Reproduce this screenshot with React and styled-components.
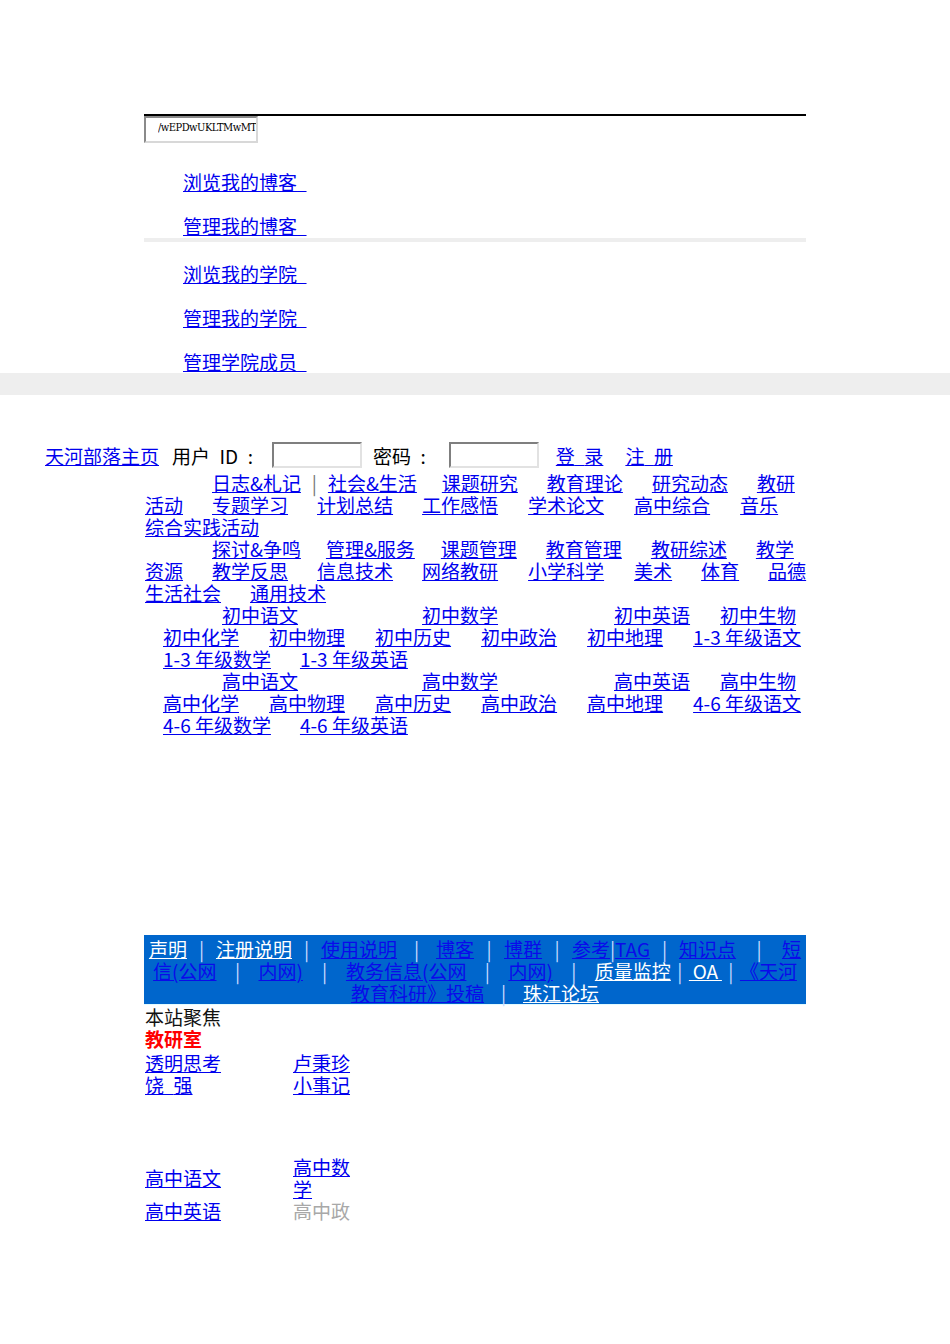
import React from "react";
import styled, { createGlobalStyle } from "styled-components";

const GlobalStyle = createGlobalStyle`
  body {
    margin: 0;
    background: #fff;
    color: #000;
    font-family: "Noto Sans CJK SC", "Liberation Sans", sans-serif;
    font-size: 19px;
  }
`;

const blogLinks = ["浏览我的博客", "管理我的博客"];
const schoolLinks = ["浏览我的学院", "管理我的学院", "管理学院成员"];

// category lines: lead = padding-left, items: [text, marginLeft] or "|"
const groupLines = [
  { lead: 67, items: [["日志&札记", 0], "|", ["社会&生活", 0], ["课题研究", 25], ["教育理论"], ["研究动态"], ["教研"]] },
  { lead: 0, items: [["活动", 0], ["专题学习"], ["计划总结"], ["工作感悟"], ["学术论文", 30], ["高中综合", 30], ["音乐", 30]] },
  { lead: 0, items: [["综合实践活动", 0]] },
  { lead: 67, items: [["探讨&争鸣", 0], ["管理&服务", 25], ["课题管理", 26], ["教育管理"], ["教研综述"], ["教学"]] },
  { lead: 0, items: [["资源", 0], ["教学反思"], ["信息技术"], ["网络教研"], ["小学科学", 30], ["美术", 30], ["体育", 29], ["品德", 29]] },
  { lead: 0, items: [["生活社会", 0], ["通用技术"]] },
];

const subjectLines = (stage, grade) => [
  { lead: 18, items: [[`${stage}语文`, 59], [`${stage}数学`, 124], [`${stage}英语`, 116], [`${stage}生物`, 30]] },
  { lead: 18, items: [[`${stage}化学`, 0], [`${stage}物理`, 30], [`${stage}历史`, 30], [`${stage}政治`, 30], [`${stage}地理`, 30], [`${grade} 年级语文`, 30]] },
  { lead: 18, items: [[`${grade} 年级数学`, 0], [`${grade} 年级英语`, 29]] },
];

const allLines = [...groupLines, ...subjectLines("初中", "1-3"), ...subjectLines("高中", "4-6")];

// footer bar rows: {t, light} links, numbers are separator widths
const footRows = [
  [{ t: "声明", light: true }, 29, { t: "注册说明", light: true }, 29, { t: "使用说明" }, 39, { t: "博客" }, 30, { t: "博群" }, 30, { t: "参考" }, 5, { t: "TAG" }, 29, { t: "知识点" }, 46, { t: "短" }],
  [{ t: "信(公网" }, 42, { t: "内网)" }, 43, { t: "教务信息(公网" }, 42, { t: "内网)" }, 42, { t: "质量监控", light: true }, 18, { t: "\u2009OA\u2009", light: true }, 18, { t: "《天河" }],
  [{ t: "教育科研》投稿" }, 39, { t: "珠江论坛", light: true }],
];

const Page = styled.div`
  padding: 114px 0 120px;
`;

const TopPanel = styled.div`
  width: 662px;
  margin: 0 auto;
  border-top: 2px solid #000;
`;

const StateBox = styled.input`
  display: block;
  box-sizing: border-box;
  width: 114px;
  height: 27px;
  margin: 0;
  padding: 0 0 4px 12px;
  border: 2px solid;
  border-color: #8a8a8a #d8d8d8 #d8d8d8 #8a8a8a;
  background: #fff;
  color: #000;
  font-family: "DejaVu Serif Condensed", "DejaVu Serif", "Liberation Serif", serif;
  font-stretch: condensed;
  font-size: 11px;
  letter-spacing: -0.5px;
  outline: none;
`;

const MenuList = styled.ul`
  list-style: none;
  margin: 0;
  padding: ${(p) => p.$top}px 0 0 39px;
  display: flex;
  flex-direction: column;
  gap: 22px;
`;

const MenuItem = styled.li`
  line-height: 22px;
  height: 22px;
`;

const Link = styled.a`
  color: #0000ee;
  text-decoration: underline;
  cursor: pointer;
`;

const ThinBar = styled.div`
  height: 4px;
  margin-top: 1px;
  background: #eeeeee;
`;

const Band = styled.div`
  height: 22px;
  background: #eeeeee;
`;

const LoginRow = styled.div`
  display: flex;
  align-items: center;
  height: 26px;
  margin-top: 47px;
  padding-left: 45px;
  white-space: nowrap;
`;

const Label = styled.span`
  margin-left: ${(p) => p.$ml}px;
`;

const LoginLink = styled(Link)`
  margin-left: ${(p) => p.$ml || 0}px;
`;

const Field = styled.input`
  box-sizing: border-box;
  width: 90px;
  height: 26px;
  margin: 0 0 0 ${(p) => p.$ml}px;
  border: 2px solid;
  border-color: #7f7f7f #e2e2e2 #e2e2e2 #7f7f7f;
  background: #fff;
  outline: none;
`;

const Categories = styled.div`
  width: 660px;
  margin: 4px auto 0;
`;

const Line = styled.div`
  display: flex;
  height: 22px;
  line-height: 22px;
  padding-left: ${(p) => p.$lead}px;
  white-space: nowrap;
`;

const CatLink = styled(Link)`
  margin-left: ${(p) => p.$ml}px;
`;

const Pipe = styled.span`
  display: inline-block;
  width: 27px;
  text-align: center;
  color: #777;
`;

const FootBar = styled.div`
  width: 662px;
  height: 66px;
  margin: 199px auto 0;
  padding-top: 3px;
  background: #0066cc;
  border-bottom: 1px solid #e2fbff;
`;

const FootLine = styled.div`
  display: flex;
  justify-content: center;
  height: 22px;
  line-height: 22px;
  white-space: nowrap;
`;

const FootLink = styled.a`
  color: ${(p) => (p.$light ? "#ffffff" : "#0a0aea")};
  text-decoration: underline;
  cursor: pointer;
`;

const FootSep = styled.span`
  display: inline-block;
  width: ${(p) => p.$w}px;
  text-align: center;
  color: #c8dcff;
`;

const Focus = styled.div`
  width: 661px;
  margin: 1px auto 0;
  padding-left: 1px;
  line-height: 22px;
`;

const FocusTitle = styled.div`
  color: #111;
`;

const Office = styled.div`
  color: #ff0000;
  font-weight: bold;
`;

const FocusGrid = styled.div`
  display: grid;
  grid-template-columns: 148px 58px;
  align-items: center;
  margin-top: ${(p) => p.$top}px;
`;

const Muted = styled.span`
  color: #a8a8a8;
`;

export default function App() {
  return (
    <Page>
      <GlobalStyle />
      <TopPanel>
        <StateBox readOnly value="/wEPDwUKLTMwMTk2NzA1OQ9kFgICAQ9kFgI" />
        <MenuList $top={28}>
          {blogLinks.map((t) => (
            <MenuItem key={t}>
              <Link>{t}{"\u2002"}</Link>
            </MenuItem>
          ))}
        </MenuList>
        <ThinBar />
        <MenuList $top={21}>
          {schoolLinks.map((t) => (
            <MenuItem key={t}>
              <Link>{t}{"\u2002"}</Link>
            </MenuItem>
          ))}
        </MenuList>
      </TopPanel>
      <Band />

      <LoginRow>
        <LoginLink>天河部落主页</LoginLink>
        <Label $ml={13}>用户{"\u2002"}ID{"\u2002"}:</Label>
        <Field $ml={19} />
        <Label $ml={11}>密码{"\u2002"}:</Label>
        <Field $ml={23} />
        <LoginLink $ml={17}>登{"\u2002"}录</LoginLink>
        <LoginLink $ml={22}>注{"\u2002"}册</LoginLink>
      </LoginRow>

      <Categories>
        {allLines.map((line, i) => (
          <Line key={i} $lead={line.lead}>
            {line.items.map((it, j) =>
              it === "|" ? (
                <Pipe key={j}>|</Pipe>
              ) : (
                <CatLink key={j} $ml={it[1] ?? 29}>
                  {it[0]}
                </CatLink>
              )
            )}
          </Line>
        ))}
      </Categories>

      <FootBar>
        {footRows.map((row, i) => (
          <FootLine key={i}>
            {row.map((it, j) =>
              typeof it === "number" ? (
                <FootSep key={j} $w={it}>|</FootSep>
              ) : (
                <FootLink key={j} $light={it.light}>
                  {it.t}
                </FootLink>
              )
            )}
          </FootLine>
        ))}
      </FootBar>

      <Focus>
        <FocusTitle>本站聚焦</FocusTitle>
        <Office>教研室</Office>
        <FocusGrid $top={2}>
          <div><Link>透明思考</Link></div>
          <div><Link>卢秉珍</Link></div>
          <div><Link>饶{"\u2002"}强</Link></div>
          <div><Link>小事记</Link></div>
        </FocusGrid>
        <FocusGrid $top={60}>
          <div><Link>高中语文</Link></div>
          <div><Link>高中数学</Link></div>
          <div><Link>高中英语</Link></div>
          <div><Muted>高中政</Muted></div>
        </FocusGrid>
      </Focus>
    </Page>
  );
}
